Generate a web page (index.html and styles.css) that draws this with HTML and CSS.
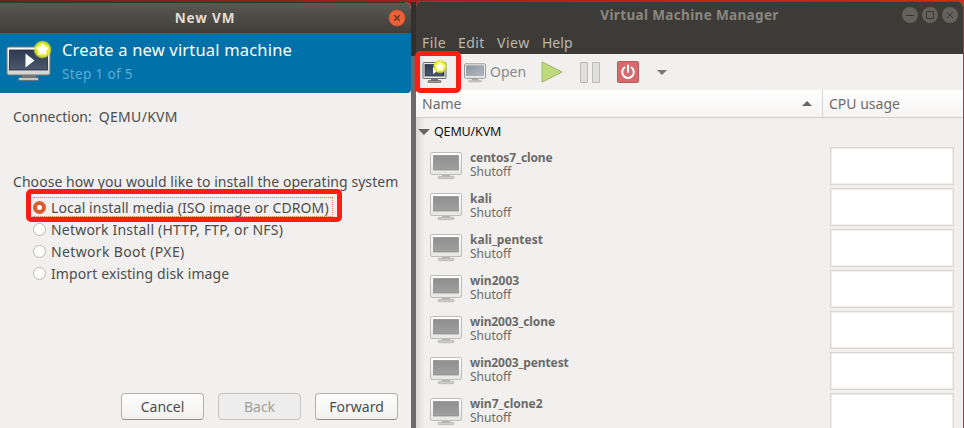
FILE: index.html
```html
<!DOCTYPE html>
<html lang="en">
<head>
<meta charset="utf-8">
<title>Virtual Machine Manager</title>
<link rel="stylesheet" href="styles.css">
</head>
<body>
<svg class="defs" aria-hidden="true">
  <defs>
    <linearGradient id="frame" x1="0" y1="0" x2="0" y2="1"><stop offset="0" stop-color="#fff"/><stop offset="1" stop-color="#d2d2d0"/></linearGradient>
    <linearGradient id="light" x1="0" y1="0" x2="0" y2="1"><stop offset="0" stop-color="#fff"/><stop offset="1" stop-color="#e6e6e5"/></linearGradient>
    <linearGradient id="navy" x1="0" y1="0" x2="0" y2="1"><stop offset="0" stop-color="#2d3a4f"/><stop offset="1" stop-color="#4c586e"/></linearGradient>
    <linearGradient id="grey" x1="0" y1="0" x2="0" y2="1"><stop offset="0" stop-color="#8f8f8f"/><stop offset="1" stop-color="#a0a0a0"/></linearGradient>
    <linearGradient id="slate" x1="0" y1="0" x2="1" y2="1"><stop offset="0" stop-color="#8b949f"/><stop offset="1" stop-color="#b3bac1"/></linearGradient>
    <radialGradient id="glow"><stop offset="0" stop-color="#fff"/><stop offset=".6" stop-color="#edf02a"/><stop offset=".8" stop-color="#dfe72b" stop-opacity=".85"/><stop offset="1" stop-color="#c8dc40" stop-opacity="0"/></radialGradient>
    <symbol id="monitor" viewBox="0 0 32 28">
      <path d="M12 22h8v3h-8z" fill="#b5b5b3"/>
      <rect x=".5" y=".5" width="31" height="22" rx="1.5" fill="url(#light)" stroke="#bdbdbb"/>
      <rect x="3.500" y="3.500" width="25" height="14.500" fill="url(#grey)" stroke="#8a8a8a" stroke-width=".7"/>
      <rect x="8" y="24.300" width="16" height="2.400" rx="1.200" fill="#ccc" stroke="#aaa" stroke-width=".6"/>
    </symbol>
    <symbol id="newvm" viewBox="0 0 46 42">
      <path d="M16 35h14v4H16z" fill="#777"/>
      <rect x="1" y="7" width="43" height="28" rx="1.8" fill="url(#frame)" stroke="#777872"/>
      <rect x="3.500" y="10" width="38" height="20" fill="url(#navy)" stroke="#222c3c" stroke-width=".8"/>
      <rect x="12.500" y="37.500" width="20" height="3" rx="1" fill="#c5c5c2" stroke="#62645f" stroke-width=".7"/>
      <path d="M19.500 13.500v14l9-7z" fill="#fff"/>
      <circle cx="36.500" cy="9.500" r="9.500" fill="url(#glow)"/>
      <path d="M36.500 3l2 4 4.500.6-3.200 3.100.8 4.500-4.100-2.100-4.100 2.100.8-4.500L30 7.600l4.500-.6z" fill="#fff"/>
    </symbol>
  </defs>
</svg>
<main class="desktop">
  <section class="dialog">
    <header class="dialog-title"><h1>New VM</h1>
      <svg class="close" viewBox="0 0 18 18"><circle cx="9" cy="9" r="8" fill="#ed6138" stroke="#c8502f"/><path d="M6.300 6.300l5.400 5.400m0-5.400l-5.400 5.400" stroke="#573326" stroke-width="1.300"/></svg>
    </header>
    <div class="banner">
      <svg class="banner-icon"><use href="#newvm"/></svg>
      <div><h2>Create a new virtual machine</h2><p>Step 1 of 5</p></div>
    </div>
    <div class="dialog-body">
      <p class="connection"><span>Connection:</span><span class="uri">QEMU/KVM</span></p>
      <p class="choose">Choose how you would like to install the operating system</p>
      <ul class="options">
        <li class="selected"><i></i><span class="o1">Local install media (ISO image or CDROM)</span></li>
        <li><i></i><span class="o2">Network Install (HTTP, FTP, or NFS)</span></li>
        <li><i></i><span class="o3">Network Boot (PXE)</span></li>
        <li><i></i><span class="o4">Import existing disk image</span></li>
      </ul>
      <footer class="actions"><button>Cancel</button><button disabled>Back</button><button class="forward">Forward</button></footer>
    </div>
  </section>
  <div class="gap"></div>
  <section class="manager">
    <header class="top">
      <h1>Virtual Machine Manager</h1>
      <svg class="controls" viewBox="0 0 58 18"><g fill="#64625c"><circle cx="9" cy="9" r="8"/><circle cx="29" cy="9" r="8"/><circle cx="49" cy="9" r="8"/></g><g fill="none" stroke="#393834"><path d="M5 9.500h8M25.500 5.500h7v7h-7zM46 6l6 6m0-6l-6 6"/></g></svg>
      <nav><span class="m1">File</span><span class="m2">Edit</span><span class="m3">View</span><span class="m4">Help</span></nav>
    </header>
    <div class="toolbar">
      <svg class="tb-new" viewBox="0 0 26 24"><path d="M9 18h7v4H9z" fill="#777"/><rect x="1" y="2.500" width="23" height="16" rx="1" fill="#e8e8e6" stroke="#6c6d69"/><rect x="3" y="4.500" width="19" height="11.500" fill="url(#navy)" stroke="#222c3c" stroke-width=".7"/><rect x="6" y="20.500" width="13" height="2" rx=".8" fill="#999" stroke="#555" stroke-width=".6"/><path d="M11 7v7l5-3.500z" fill="#fff"/><circle cx="18" cy="6.500" r="7.300" fill="url(#glow)"/><path d="M18 1.500l1.600 3.300 3.600.5-2.600 2.500.6 3.600-3.200-1.700-3.200 1.700.6-3.600-2.600-2.500 3.600-.5z" fill="#fffff0"/></svg>
      <svg class="tb-open" viewBox="0 0 22 20"><path d="M8 15h6v3H8z" fill="#aaa"/><rect x=".5" y=".8" width="21" height="14.500" rx="1" fill="#ecebea" stroke="#9a9a98"/><rect x="2.500" y="2.800" width="17" height="9.500" fill="url(#slate)" stroke="#858b92" stroke-width=".6"/><rect x="4.500" y="17.200" width="13" height="1.800" rx=".8" fill="#ccc" stroke="#aaa" stroke-width=".5"/></svg>
      <span class="open">Open</span>
      <svg class="tb-play" viewBox="0 0 22 22"><path d="M1 .8v20.400L21 11z" fill="#bfd97d" stroke="#9bb967"/></svg>
      <svg class="tb-pause" viewBox="0 0 20 21"><g fill="#dededc" stroke="#bbbcb9"><path d="M.5.500h7v20h-7zM12.500.500h7v20h-7z"/></g></svg>
      <svg class="tb-power" viewBox="0 0 22 22"><rect x=".5" y=".5" width="21" height="21" rx="1.500" fill="#d76a6d" stroke="#bd5659"/><path d="M7.500 6.500a5.800 5.800 0 1 0 7 0M11 4.500v6.500" fill="none" stroke="#fff" stroke-width="2" stroke-linecap="round"/></svg>
      <svg class="tb-arrow" viewBox="0 0 10 5"><path d="M0 0h10L5 5z" fill="#777"/></svg>
    </div>
    <div class="columns"><div class="col-name"><span>Name</span><svg viewBox="0 0 10 5"><path d="M0 5h10L5 0z" fill="#666"/></svg></div><div class="col-cpu"><span>CPU usage</span></div></div>
    <div class="group"><svg viewBox="0 0 12 6"><path d="M0 0h12L6 6z" fill="#666"/></svg><span>QEMU/KVM</span></div>
    <div class="vms">
      <div class="vm"><svg><use href="#monitor"/></svg><div><b class="n1">centos7_clone</b><em>Shutoff</em></div><div class="graph"></div></div>
      <div class="vm"><svg><use href="#monitor"/></svg><div><b class="n2">kali</b><em>Shutoff</em></div><div class="graph"></div></div>
      <div class="vm"><svg><use href="#monitor"/></svg><div><b class="n3">kali_pentest</b><em>Shutoff</em></div><div class="graph"></div></div>
      <div class="vm"><svg><use href="#monitor"/></svg><div><b class="n4">win2003</b><em>Shutoff</em></div><div class="graph"></div></div>
      <div class="vm"><svg><use href="#monitor"/></svg><div><b class="n5">win2003_clone</b><em>Shutoff</em></div><div class="graph"></div></div>
      <div class="vm"><svg><use href="#monitor"/></svg><div><b class="n6">win2003_pentest</b><em>Shutoff</em></div><div class="graph"></div></div>
      <div class="vm"><svg><use href="#monitor"/></svg><div><b class="n7">win7_clone2</b><em>Shutoff</em></div><div class="graph"></div></div>
    </div>
  </section>
  <div class="mark mark-option"></div>
  <div class="mark mark-new"></div>
</main>
</body>
</html>
```
FILE: styles.css
```css
* { box-sizing: border-box; margin: 0; padding: 0; }
body { width: 964px; height: 428px; overflow: hidden; font: 14px/20px "Noto Sans", sans-serif; color: #4c4c4c; }
svg { display: block; flex: none; }
span, b, em, h1, h2, p { white-space: nowrap; }
.defs { position: absolute; width: 0; height: 0; }
.desktop { position: relative; display: flex; width: 964px; height: 428px; background: linear-gradient(90deg, #7b1c22, #a02121 45%, #c43317); }
.dialog { width: 411px; height: 426px; margin-top: 2px; display: flex; flex-direction: column; background: #f1f0ee; border-radius: 0 7px 0 0; overflow: hidden; }
.dialog-title { position: relative; flex: none; height: 31px; background: linear-gradient(#5a5851, #403e39); border-top: 1px solid #35332f; display: flex; align-items: center; justify-content: center; color: #e2ddd3; }
h1 { font-size: 13.500px; line-height: 20px; font-weight: 700; letter-spacing: .35px; }
.dialog-title h1 { letter-spacing: .9px; padding-right: 1px; }
.close { position: absolute; left: 388px; top: 6px; width: 18px; height: 18px; }
.banner { flex: none; height: 60px; background: #0072a9; border-radius: 0 0 4px 0; display: flex; color: #fff; }
.banner-icon { width: 46px; height: 42px; margin: 7px 10px 0 6px; }
.banner h2 { font-size: 16.500px; line-height: 22px; font-weight: 400; margin-top: 6px; letter-spacing: .18px; }
.banner p { color: #5eacd4; line-height: 18px; margin-top: 4px; font-size: 13.500px; letter-spacing: .35px; }
.dialog-body { flex: 1; padding: 14px 13px 8px 13px; display: flex; flex-direction: column; }
.connection { display: flex; gap: 7px; }
.uri { letter-spacing: .3px; }
.choose { margin-top: 45px; letter-spacing: .06px; }
.options { list-style: none; padding-left: 20px; margin-top: 4px; }
.options li { height: 22px; display: flex; align-items: center; gap: 5px; }
.options li span { padding-top: 1px; }
.o1 { letter-spacing: .08px; } .o2 { letter-spacing: .2px; } .o3 { letter-spacing: .35px; } .o4 { letter-spacing: .11px; }
.options i { width: 13px; height: 13px; border-radius: 50%; border: 1px solid #b8b7b4; background: #fff; }
.options .selected { width: 300px; height: 20px; margin: 1px 0; border: 1px dotted #ec7f53; border-left: 0; }
.options .selected i { border: 4px solid #d95b30; }
.actions { display: flex; justify-content: flex-end; gap: 14px; margin-top: auto; }
button { width: 83px; height: 27px; font: 14px/20px "Noto Sans", sans-serif; color: #4c4c4c; border: 1px solid #b1b0ad; border-bottom-color: #8f8e8b; border-radius: 4px; background: linear-gradient(#fff, #f1f0ef); }
button:disabled { color: #a29f9a; background: #eeeded; border-color: #c5c4c2; }
.gap { width: 5px; margin-top: 2px; background: linear-gradient(#32302d 54px, #6c696d 54px); }
.manager { width: 547px; height: 427px; margin-top: 1px; background: linear-gradient(90deg, #dbd9d8, #f1f0ee 9px); border-radius: 6px 6px 0 0; overflow: hidden; }
.top { position: relative; height: 53px; background: #3c3b37; color: #8a8780; border-top: 1px solid #53514b; }
.top h1 { text-align: center; padding-top: 3px; }
.controls { position: absolute; right: 4px; top: 4px; width: 58px; height: 18px; }
nav { display: flex; padding: 8px 0 0 6px; color: #bbb8b0; }
.m1 { width: 36px; letter-spacing: .4px; } .m2 { width: 39px; letter-spacing: .4px; } .m3 { width: 45px; letter-spacing: .5px; }
.toolbar { height: 36px; display: flex; align-items: center; color: #8b8a88; }
.tb-new { width: 26px; height: 24px; margin-left: 6px; }
.tb-open { width: 22px; height: 20px; margin-left: 16px; margin-top: 2px; }
.open { margin-left: 4px; width: 36px; }
.tb-play { width: 22px; height: 22px; margin-left: 15px; }
.tb-pause { width: 20px; height: 21px; margin-left: 17px; }
.tb-power { width: 22px; height: 22px; margin-left: 17px; }
.tb-arrow { width: 10px; height: 5px; margin-left: 18px; }
.columns { display: flex; height: 28px; background: linear-gradient(#fff, #f5f4f3); border-bottom: 1px solid #cfcecb; color: #6d6c6a; line-height: 27px; }
.col-name { width: 407px; padding: 0 10px 0 6px; border-right: 1px solid #d5d4d1; display: flex; justify-content: space-between; align-items: center; }
.col-name svg { width: 10px; height: 5px; margin-top: -1px; }
.col-cpu { padding-left: 6px; }
.group { height: 27px; display: flex; align-items: center; gap: 4px; padding-left: 2px; color: #111; font-size: 12.500px; letter-spacing: -.15px; }
.group svg { width: 12px; height: 6px; }
.vm { height: 41px; display: flex; align-items: flex-start; padding: 2px 9px 0 14px; }
.vm > svg { width: 32px; height: 28px; margin: 5px 8px 0 0; }
.vm b, .vm em { display: block; font-size: 12px; line-height: 12px; font-style: normal; color: #6b6a68; }
.vm b { margin-top: 5px; }
.vm em { margin-top: 2px; }
.n1, .n5, .n6 { letter-spacing: -.1px; }
.graph { width: 124px; height: 38px; margin-left: auto; background: #fff; border: 1px solid #d8d6d5; box-shadow: inset 0 0 0 1px #efeeed; }
.mark { position: absolute; border: 5px solid #ff1e14; border-radius: 5px; }
.mark-option { left: 26px; top: 189px; width: 316px; height: 33px; }
.mark-new { left: 415px; top: 51px; width: 46px; height: 42px; }
```
